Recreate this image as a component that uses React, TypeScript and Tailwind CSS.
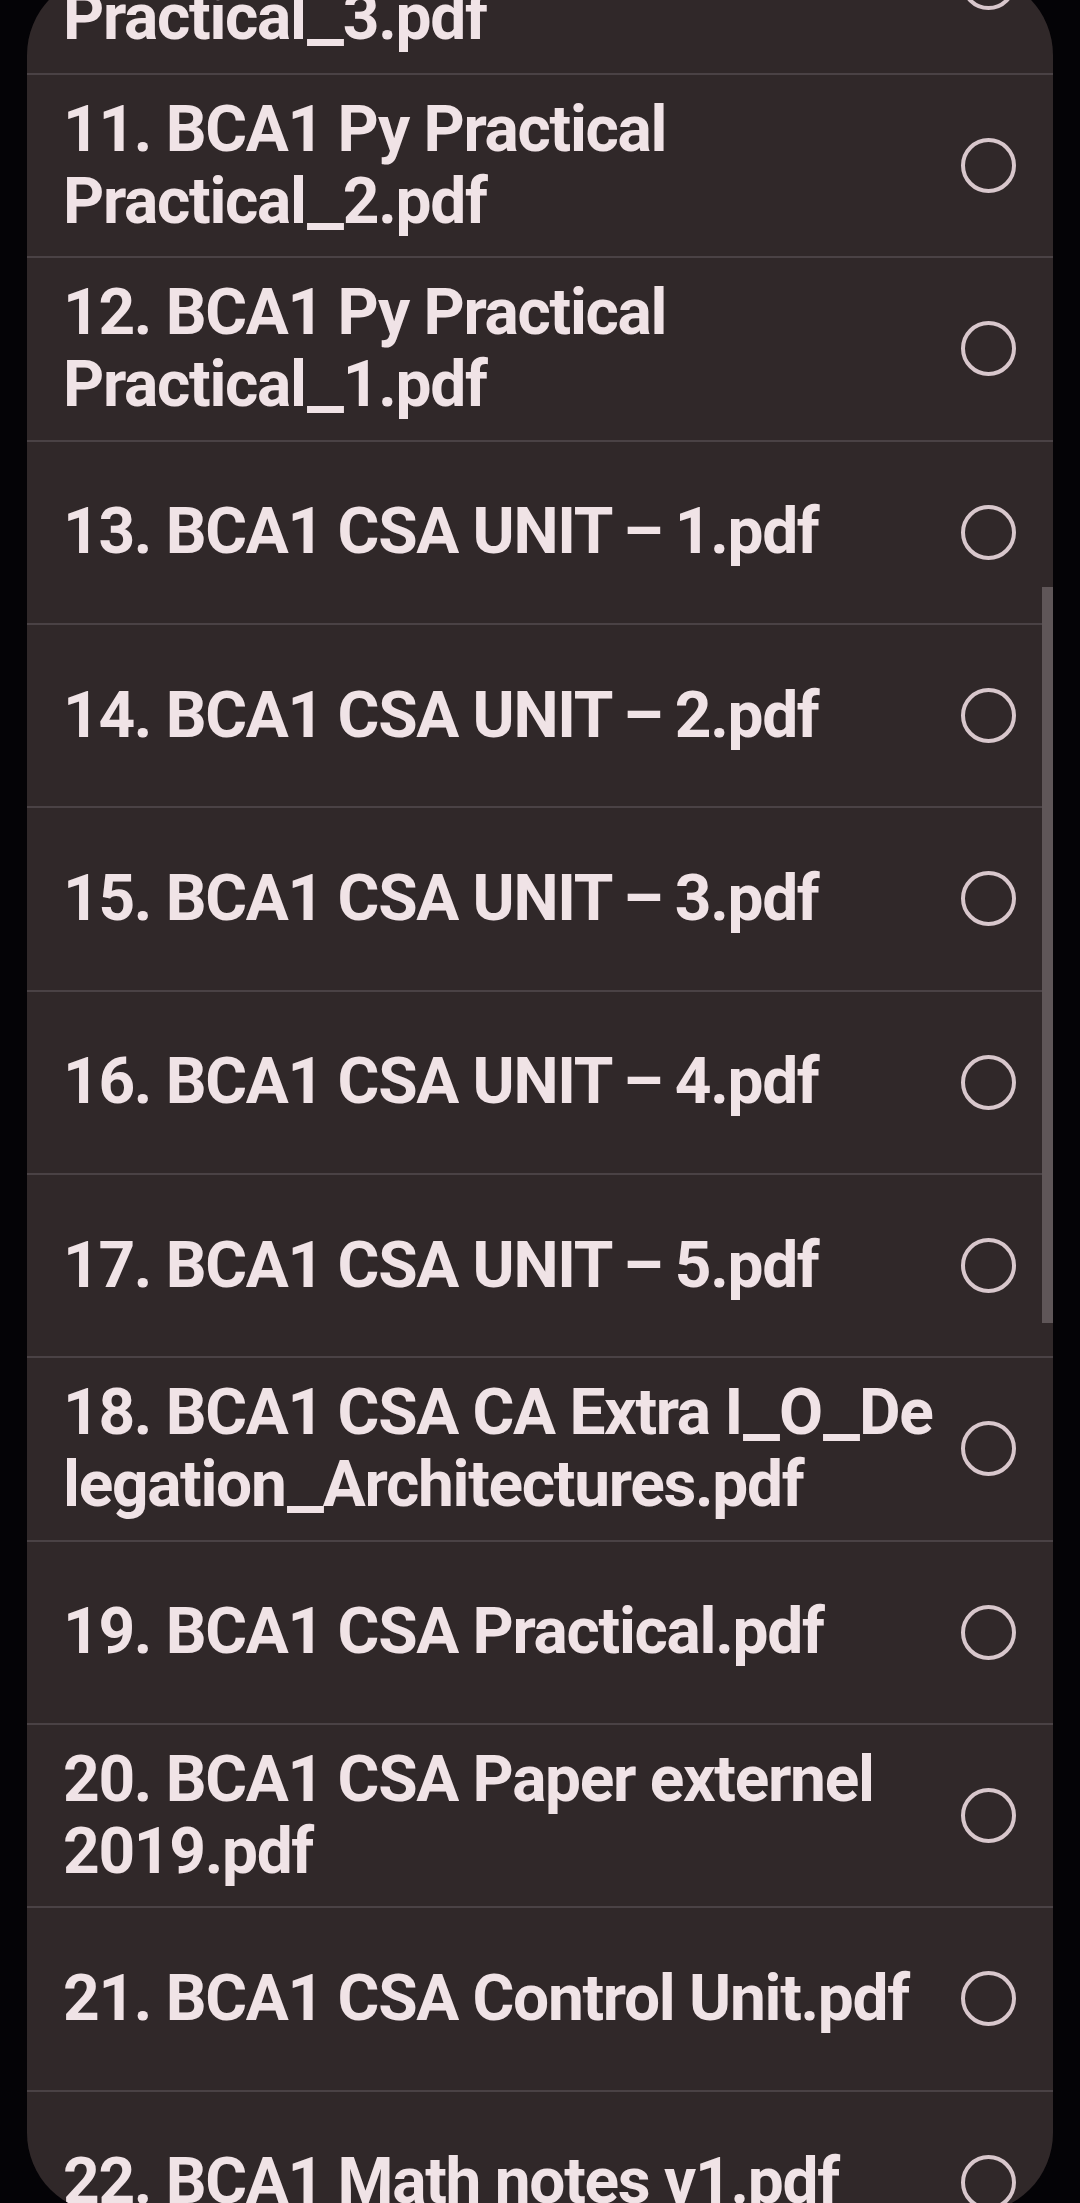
import React from "react";

const rows: string[][] = [
  ["10. BCA1 Py Practical", "Practical_3.pdf"],
  ["11. BCA1 Py Practical", "Practical_2.pdf"],
  ["12. BCA1 Py Practical", "Practical_1.pdf"],
  ["13. BCA1 CSA UNIT – 1.pdf"],
  ["14. BCA1 CSA UNIT – 2.pdf"],
  ["15. BCA1 CSA UNIT – 3.pdf"],
  ["16. BCA1 CSA UNIT – 4.pdf"],
  ["17. BCA1 CSA UNIT – 5.pdf"],
  ["18. BCA1 CSA CA Extra I_O_De", "legation_Architectures.pdf"],
  ["19. BCA1 CSA Practical.pdf"],
  ["20. BCA1 CSA Paper externel", "2019.pdf"],
  ["21. BCA1 CSA Control Unit.pdf"],
  ["22. BCA1 Math notes v1.pdf"],
  ["23. BCA1 Math notes v2.pdf"],
];

function Seg({ text }: { text: string }) {
  const parts = text.split("–");
  return (
    <>
      {parts.map((p, k) => (
        <React.Fragment key={k}>
          {k > 0 && <span className="mx-[-2px] inline-block">–</span>}
          {p}
        </React.Fragment>
      ))}
    </>
  );
}

function Line({ text }: { text: string }) {
  const parts = text.split("_");
  return (
    <div className="whitespace-pre">
      {parts.map((p, k) => (
        <React.Fragment key={k}>
          {k > 0 && <span className="mx-[5px] inline-block scale-x-[1.3]">_</span>}
          <Seg text={p} />
        </React.Fragment>
      ))}
    </div>
  );
}

export default function App() {
  return (
    <div className="h-[2203px] w-[1080px] overflow-hidden bg-[#040306]">
      <div
        className="relative mx-[27px] mt-[-25px] h-[2238px] overflow-hidden rounded-[80px] bg-[#302829]"
        style={{ fontFamily: "Roboto, 'Noto Sans', sans-serif" }}
      >
        <div className="mt-[-83.33px] flex flex-col">
          {rows.map((lines, i) => (
            <div
              key={i}
              className="box-border flex h-[183.33px] items-center justify-between border-b-2 border-[#4a4245] pl-[36px] pr-[37px]"
            >
              <div className="text-[64px] font-bold leading-[72px] tracking-[-1.3px] text-[#f0e3e6]">
                {lines.map((l, j) => (
                  <Line key={j} text={l} />
                ))}
              </div>
              <div className="h-[55px] w-[55px] shrink-0 rounded-full border-[4px] border-[#d8c7cc]" />
            </div>
          ))}
        </div>
        <div className="absolute right-0 top-[612px] h-[736px] w-[11px] bg-[#5f5658]" />
      </div>
    </div>
  );
}
